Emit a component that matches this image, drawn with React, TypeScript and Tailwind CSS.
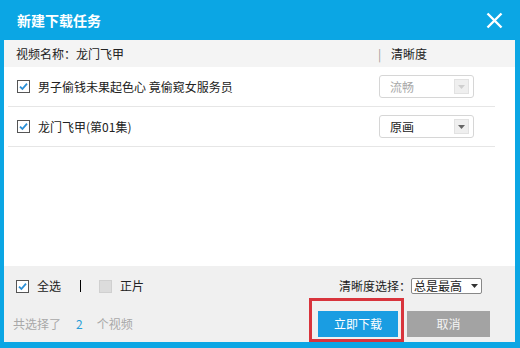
import React from "react";

const FONT = "font-['SimSun','Noto_Sans_CJK_SC',sans-serif]";

// small checkbox: checked = blue tick, disabled = gray filled box
const CheckBox = ({ checked = false, disabled = false }: { checked?: boolean; disabled?: boolean }) => (
  <svg width="13" height="13" viewBox="0 0 13 13" className="shrink-0">
    <rect
      x="0.5"
      y="0.5"
      width="12"
      height="12"
      fill={disabled ? "#dcdcdc" : "#ffffff"}
      stroke={disabled ? "#d0d0d0" : "#555555"}
    />
    {checked && (
      <path d="M3 6.6 L5.4 9 L10 3.6" fill="none" stroke="#2b8fd6" strokeWidth="1.8" />
    )}
  </svg>
);

const Dropdown = ({ value, disabled = false }: { value: string; disabled?: boolean }) => (
  <div className="flex h-[23px] w-[95px] items-center justify-between rounded-[3px] border border-[#d6d6d6] bg-white pl-[10px] pr-[4px]">
    <span className={disabled ? "text-[#a8a8a8]" : "text-[#222]"}>{value}</span>
    <span className="flex h-[15px] w-[15px] items-center justify-center border border-[#e2e2e2] bg-[#efefef]">
      <svg width="7" height="4" viewBox="0 0 7 4">
        <path d="M0 0 H7 L3.5 4 Z" fill={disabled ? "#cfcfcf" : "#666666"} />
      </svg>
    </span>
  </div>
);

const items = [
  { name: "男子偷钱未果起色心 竟偷窥女服务员", quality: "流畅", disabled: true },
  { name: "龙门飞甲(第01集)", quality: "原画", disabled: false },
];

export default function App() {
  return (
    <div className={`flex h-[348px] w-[520px] flex-col bg-[#0ba6e4] text-[12px] ${FONT}`}>
      {/* title bar */}
      <div className="flex h-[40px] shrink-0 items-center justify-between pl-[17px] pr-[17px]">
        <span className="text-[14px] font-bold text-white">新建下载任务</span>
        <svg width="17" height="17" viewBox="0 0 17 17">
          <path d="M1.5 1.5 L15.5 15.5 M15.5 1.5 L1.5 15.5" stroke="#ffffff" strokeWidth="2.4" />
        </svg>
      </div>

      <div className="mb-[6px] ml-[4px] mr-[5px] flex flex-1 flex-col bg-white">
        {/* column header */}
        <div className="flex h-[27px] shrink-0 items-center bg-[#f4f4f4] pl-[12px] text-[#222]">
          <span className="w-[362px]">视频名称：龙门飞甲</span>
          <span className="w-[13px] text-[#999]">|</span>
          <span>清晰度</span>
        </div>

        {/* list */}
        <div className="ml-[4px] mr-[20px] flex flex-1 flex-col">
          {items.map((item) => (
            <div
              key={item.name}
              className="flex h-[40px] items-center justify-between border-b border-[#e6e6e6] pl-[9px] pr-[21px]"
            >
              <div className="flex items-center gap-[8px] text-[#222]">
                <CheckBox checked />
                <span>{item.name}</span>
              </div>
              <Dropdown value={item.quality} disabled={item.disabled} />
            </div>
          ))}
        </div>

        {/* footer */}
        <div className="flex h-[76px] shrink-0 flex-col bg-[#f0f0f0] pt-[12px]">
          <div className="flex h-[16px] items-center justify-between pl-[12px] pr-[33px]">
            <div className="flex items-center text-[#222]">
              <CheckBox checked />
              <span className="ml-[8px]">全选</span>
              <span className="ml-[19px] h-[12px] w-[1px] bg-black" />
              <span className="ml-[18px]">
                <CheckBox disabled />
              </span>
              <span className="ml-[8px]">正片</span>
            </div>
            <div className="flex items-center text-[#222]">
              <span>清晰度选择：</span>
              <div className="flex h-[16px] w-[71px] items-center justify-between rounded-[2px] border border-[#888] bg-white pl-[2px] pr-[3px]">
                <span>总是最高</span>
                <svg width="7" height="4" viewBox="0 0 7 4">
                  <path d="M0 0 H7 L3.5 4 Z" fill="#333333" />
                </svg>
              </div>
            </div>
          </div>

          <div className="mt-[17px] flex h-[26px] items-center justify-between pl-[9px] pr-[25px]">
            <div className="flex items-center text-[#a8a8a8]">
              <span>共选择了</span>
              <span className="ml-[15px] text-[#2a9fd8]">2</span>
              <span className="ml-[14px]">个视频</span>
            </div>
            <div className="flex items-center gap-[9px]">
              <button className="relative h-[26px] w-[80px] bg-[#1a9de2] text-[12px] text-white">
                立即下载
                <span className="pointer-events-none absolute -bottom-[5px] -left-[9px] -right-[6px] -top-[13px] border-[3px] border-[#d8343c]" />
              </button>
              <button className="h-[26px] w-[83px] bg-[#a3a3a3] text-[12px] text-[#f4f4f4]">取消</button>
            </div>
          </div>
        </div>
      </div>
    </div>
  );
}
